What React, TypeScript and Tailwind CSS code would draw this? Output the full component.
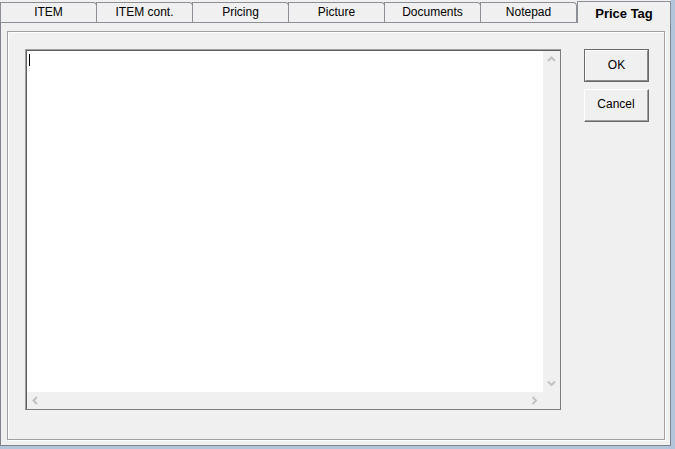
import React from 'react';

const tabs = ['ITEM', 'ITEM cont.', 'Pricing', 'Picture', 'Documents', 'Notepad'];

function Chevron({ dir }: { dir: 'up' | 'down' | 'left' | 'right' }) {
  const paths: Record<string, string> = {
    up: 'M1 5 L4.5 1.5 L8 5',
    down: 'M1 1.5 L4.5 5 L8 1.5',
    left: 'M5 1 L1.5 4.5 L5 8',
    right: 'M1.5 1 L5 4.5 L1.5 8',
  };
  const vertical = dir === 'up' || dir === 'down';
  return (
    <svg width={vertical ? 9 : 7} height={vertical ? 7 : 9} viewBox={vertical ? '0 0 9 7' : '0 0 7 9'}>
      <path d={paths[dir]} fill="none" stroke="#c2c2c2" strokeWidth="2" />
    </svg>
  );
}

function Memo() {
  return (
    <div className="w-[536px] h-[361px] border border-[#7c7c7c] border-t-[#a0a0a0] border-l-[#a0a0a0] flex">
      <div className="flex-1 flex flex-col border-t border-l border-[#5f5f5f]">
        <div className="flex-1 flex min-h-0">
          {/* text area */}
          <div className="flex-1 bg-white relative">
            <div className="absolute left-[2px] top-[3px] w-px h-[12px] bg-black" />
          </div>
          {/* vertical scrollbar */}
          <div className="w-[17px] bg-[#f0f0f0] flex flex-col justify-between">
            <div className="h-[17px] flex items-center justify-center">
              <Chevron dir="up" />
            </div>
            <div className="h-[17px] flex items-center justify-center">
              <Chevron dir="down" />
            </div>
          </div>
        </div>
        {/* horizontal scrollbar */}
        <div className="h-[17px] flex bg-[#f0f0f0]">
          <div className="flex-1 flex items-center justify-between">
            <div className="w-[17px] flex items-center justify-center">
              <Chevron dir="left" />
            </div>
            <div className="w-[17px] flex items-center justify-center">
              <Chevron dir="right" />
            </div>
          </div>
          <div className="w-[17px] bg-[#f0f0f0]" />
        </div>
      </div>
    </div>
  );
}

export default function App() {
  return (
    <div
      className="w-[675px] h-[449px] bg-[#f0f0f0] border-r-4 border-b-[3px] border-[#b3c5db] flex flex-col text-black"
      style={{ fontFamily: '"Liberation Sans", Arial, sans-serif' }}
    >
      {/* tab strip */}
      <div className="h-[22px] flex items-end">
        {tabs.map((t) => (
          <div
            key={t}
            className="w-[97px] h-[20px] border-t border-l border-r border-[#8c8f96] rounded-tr-[4px] -mr-px bg-[#f0f0f0] flex items-center justify-center text-[12px] leading-none pb-px"
          >
            {t}
          </div>
        ))}
        <div className="w-[94px] h-[22px] -mb-px ml-px border-t border-l border-r border-[#8c8f96] bg-[#f0f0f0] relative z-10 flex items-center justify-center text-[13px] font-bold leading-none pt-px">
          Price Tag
        </div>
      </div>

      {/* page */}
      <div className="flex-1 w-[671px] border border-[#7f838c] border-t-[#8c8f96] pl-[6px] pt-[8px] pr-[5px] pb-[5px] flex flex-col">
        <div className="flex-1 border border-[#a0a0a0] shadow-[inset_1px_1px_0_#fff,1px_1px_0_#fff] pl-[17px] pt-[17px] pr-[15px] flex gap-[23px]">
          <Memo />
          <div className="flex flex-col gap-[7px]">
            <button className="w-[65px] h-[33px] border border-[#6a6a6a] bg-[#f0f0f0] text-[12px] flex">
              <span className="flex-1 flex items-center justify-center border border-white border-r-[#8a8a8a] border-b-[#8a8a8a] pb-[2px]">
                OK
              </span>
            </button>
            <button className="w-[65px] h-[33px] border border-white border-r-[#6a6a6a] border-b-[#6a6a6a] bg-[#f0f0f0] text-[12px] flex">
              <span className="flex-1 flex items-center justify-center border-r border-b border-[#a0a0a0] pb-[2px]">
                Cancel
              </span>
            </button>
          </div>
        </div>
      </div>
    </div>
  );
}
